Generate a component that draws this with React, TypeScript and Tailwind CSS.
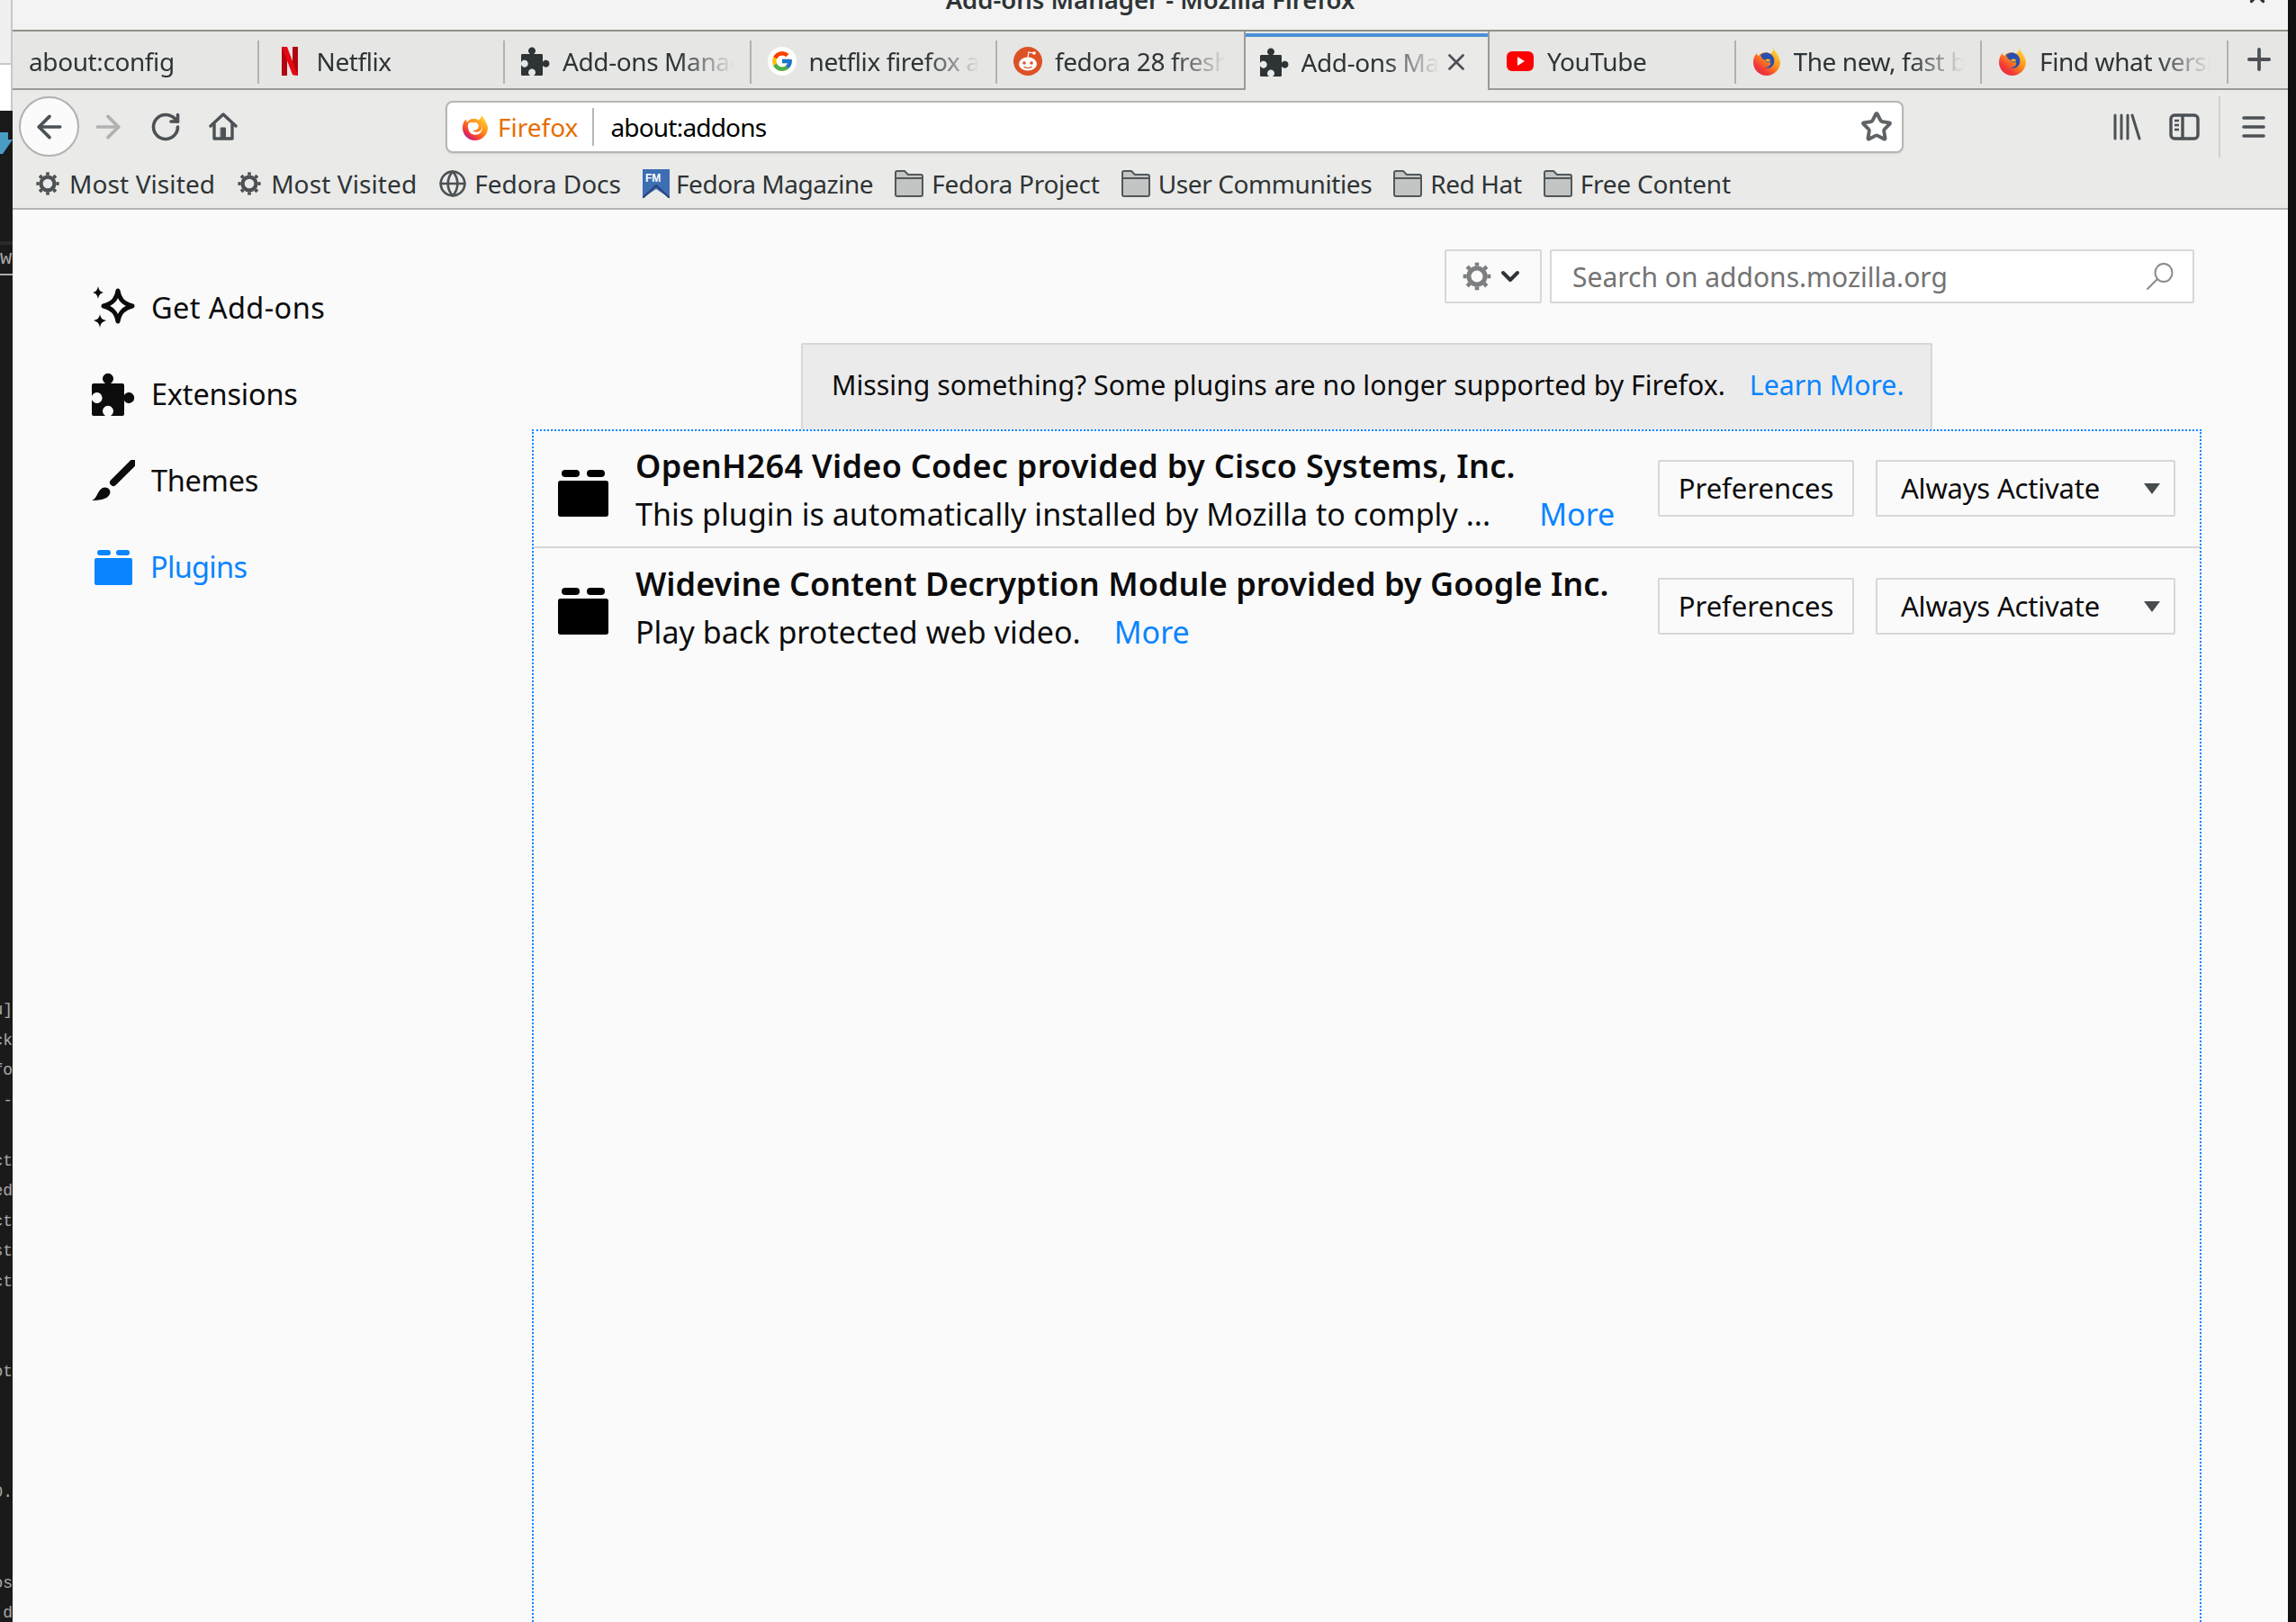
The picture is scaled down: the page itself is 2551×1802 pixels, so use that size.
import { ReactNode } from "react";
import { ArrowLeft, ArrowRight, ChevronDown, Globe, Plus, RotateCw, Star, X } from "lucide-react";
import { FcGoogle } from "react-icons/fc";

const PUZZLE =
    "M2 12H15A6 6 0 1 1 21 12H34A2 2 0 0 1 36 14V25A6 6 0 1 1 36 31V46A2 2 0 0 1 34 48H21A6 6 0 1 0 15 48H2A2 2 0 0 1 0 46V30A6 6 0 1 0 0 26V14A2 2 0 0 1 2 12Z";

function Puzzle({ size, color }: { size: number; color: string }) {
    return (
        <svg width={size} height={size} viewBox="0 0 48 48" fill={color}>
            <path d={PUZZLE} />
        </svg>
    );
}

function Brick({ w, h, color }: { w: number; h: number; color: string }) {
    return (
        <svg width={w} height={h} viewBox="0 0 42 39" fill={color}>
            <rect x="3" y="0" width="15" height="6" rx="3" />
            <rect x="24" y="0" width="15" height="6" rx="3" />
            <rect x="0" y="9" width="42" height="30" rx="2" />
        </svg>
    );
}

function Gear({ size, color }: { size: number; color: string }) {
    return (
        <svg width={size} height={size} viewBox="0 0 30 30" fill="none" stroke={color}>
            <circle cx="15" cy="15" r="8" strokeWidth="4.5" />
            {[0, 45, 90, 135, 180, 225, 270, 315].map((a) => (
                <line key={a} x1="15" y1="5" x2="15" y2="1.5" strokeWidth="4" transform={`rotate(${a} 15 15)`} />
            ))}
        </svg>
    );
}

function Folder() {
    return (
        <svg width="32" height="30" viewBox="0 0 32 30" fill="#c3c5c4" stroke="#51575a" strokeWidth="2">
            <path d="M1 27V3a2 2 0 0 1 2-2h8l4 4h14a2 2 0 0 1 2 2v20a2 2 0 0 1-2 2H3a2 2 0 0 1-2-2Z" />
            <path d="M1 9h30" fill="none" />
        </svg>
    );
}

function FedoraMag() {
    return (
        <svg width="30" height="32" viewBox="0 0 30 32">
            <path d="M0 0H30V32L15 22 0 32Z" fill="#3c6eb4" />
            <path d="M0 32 15 18 30 32" fill="none" stroke="#294172" strokeWidth="2" />
            <text x="3" y="14" fontSize="12" fontWeight="700" fill="#fff" fontFamily="Liberation Sans, sans-serif">
                FM
            </text>
        </svg>
    );
}

function Firefox({ size, blue }: { size: number; blue?: boolean }) {
    const id = blue ? "ffb" : "ffo";
    return (
        <svg width={size} height={size} viewBox="0 0 32 32">
            <defs>
                <linearGradient id={id} x1="0.85" y1="0.1" x2="0.2" y2="0.95">
                    <stop offset="0" stopColor="#ffd43a" />
                    <stop offset="0.45" stopColor="#ff8a16" />
                    <stop offset="0.8" stopColor="#f2383a" />
                    <stop offset="1" stopColor={blue ? "#e8303c" : "#b5179e"} />
                </linearGradient>
            </defs>
            <path
                d="M23 1C24 4 30 9 31 17 31 25 24 32 16 32 7 32 1 25 1 17 1 12 3 9 5 7 5 9 6 10 7 10 9 7 12 6 15 6 17 6 19 7 20 8 22 6 24 4 23 1Z"
                fill={`url(#${id})`}
            />
            {blue ? (
                <>
                    <path d="M9 9C11 7 15 6 18 7 23 9 25 13 24 18 23 23 17 25 13 23 17 23 21 21 20 17 17 18 14 17 14 15 11 14 10 12 9 9Z" fill="#2a4eb0" />
                    <path d="M14 15C16 13 19 13 20 15 19 17 16 17 14 15Z" fill="#ffb020" />
                </>
            ) : (
                <path d="M8 12C10 10 13 10 14 11 17 10 20 12 20 15 20 19 16 21 13 20 16 24 24 22 24 16 24 12 22 10 21 9 25 13 26 20 21 24 16 27 9 25 8 19 7 16 7 14 8 12Z" fill="#fff" />
            )}
        </svg>
    );
}

function Reddit() {
    return (
        <svg width="32" height="32" viewBox="0 0 32 32">
            <circle cx="16" cy="16" r="16" fill="#dd5127" />
            <ellipse cx="16" cy="19" rx="10" ry="7.5" fill="#fff" />
            <path d="M16 12 17 6 22 7" fill="none" stroke="#fff" strokeWidth="1.2" />
            <circle cx="23" cy="7" r="1.8" fill="#fff" />
            <circle cx="12" cy="18" r="1.8" fill="#dd5127" />
            <circle cx="20" cy="18" r="1.8" fill="#dd5127" />
            <path d="M11.5 22C14 24 18 24 20.5 22" fill="none" stroke="#dd5127" strokeWidth="1.2" />
        </svg>
    );
}

function Netflix() {
    return (
        <svg width="18" height="32" viewBox="0 0 18 32">
            <path d="M0 0H6V32L0 32Z" fill="#b1060f" />
            <path d="M12 0H18V32L12 31Z" fill="#b1060f" />
            <path d="M0 0H6L18 32 12 31Z" fill="#e50914" />
        </svg>
    );
}

function YouTube() {
    return (
        <svg width="30" height="22" viewBox="0 0 30 22">
            <rect width="30" height="22" rx="6" fill="#f00" />
            <path d="M12 6 20 11 12 16Z" fill="#fff" />
        </svg>
    );
}

const tabs: { label: string; icon?: ReactNode; active?: boolean }[] = [
    { label: "about:config" },
    { label: "Netflix", icon: <Netflix /> },
    { label: "Add-ons Manager", icon: <Puzzle size={32} color="#2e3436" /> },
    {
        label: "netflix firefox addon",
        icon: (
            <span className="flex h-[32px] w-[32px] items-center justify-center rounded-full bg-white">
                <FcGoogle size={26} />
            </span>
        ),
    },
    { label: "fedora 28 fresh install", icon: <Reddit /> },
    { label: "Add-ons Manager", icon: <Puzzle size={32} color="#2e3436" />, active: true },
    { label: "YouTube", icon: <YouTube /> },
    { label: "The new, fast browser", icon: <Firefox size={32} blue /> },
    { label: "Find what version of", icon: <Firefox size={32} blue /> },
];

const bookmarks: { label: string; icon: ReactNode; cls: string; gap: string }[] = [
    { label: "Most Visited", icon: <Gear size={28} color="#4b5154" />, cls: "tracking-[0.1px]", gap: "gap-[10px]" },
    { label: "Most Visited", icon: <Gear size={28} color="#4b5154" />, cls: "tracking-[0.1px]", gap: "gap-[10px]" },
    { label: "Fedora Docs", icon: <Globe size={32} color="#4b5154" strokeWidth={2} />, cls: "tracking-normal", gap: "gap-[8px]" },
    { label: "Fedora Magazine", icon: <FedoraMag />, cls: "tracking-[-0.45px]", gap: "gap-[7px]" },
    { label: "Fedora Project", icon: <Folder />, cls: "tracking-[-0.25px]", gap: "gap-[9px]" },
    { label: "User Communities", icon: <Folder />, cls: "tracking-[-0.4px]", gap: "gap-[9px]" },
    { label: "Red Hat", icon: <Folder />, cls: "tracking-[-0.4px]", gap: "gap-[9px]" },
    { label: "Free Content", icon: <Folder />, cls: "tracking-[-0.2px]", gap: "gap-[9px]" },
];

const termLines = ["u]", "ck", "fo", " -", "", "ct", "ed", "ct", "st", "ct", "", "", "ot", "", "", "", "0.", "", "", "os", "d"];

function TabItem({ label, icon, active }: { label: string; icon?: ReactNode; active?: boolean }) {
    return (
        <div
            className={
                active
                    ? "relative flex h-full w-[273.5px] shrink-0 items-center border-x-2 border-[#9a9a96] bg-[#eaeae8] pl-[16px] pr-[20px] pt-[2px]"
                    : "flex h-full w-[273.5px] shrink-0 items-center border-b-2 border-[#9a9a96] pl-[18px] pr-[20px] pt-[2px]"
            }
        >
            {active && <div className="absolute left-0 right-0 top-[2px] h-[4px] bg-[#4a90d9]" />}
            {icon && <div className="mr-[14px] flex w-[32px] shrink-0 justify-center">{icon}</div>}
            <div className="min-w-0 flex-1 overflow-hidden whitespace-nowrap text-[28px] leading-[40px] tracking-[-0.4px] text-[#2e3436] [mask-image:linear-gradient(to_right,black_calc(100%-60px),transparent)]">
                {label}
            </div>
            {active && <X size={30} color="#4b5154" strokeWidth={2.2} className="ml-[4px] shrink-0" />}
        </div>
    );
}

function Separator() {
    return (
        <div className="flex h-full w-0 items-start">
            <div className="relative mt-[10px] h-[48px] w-[2px] shrink-0 -translate-x-[2px] bg-[#b2b2ae]" />
        </div>
    );
}

function PluginRow(props: { title: string; desc: string; border?: boolean; titleCls: string; moreCls: string }) {
    const { title, desc, border, titleCls, moreCls } = props;
    return (
        <div
            className={
                border
                    ? "flex h-[130px] items-center border-b-2 border-[#d7d7db] px-[27px]"
                    : "flex h-[130px] items-center px-[27px]"
            }
        >
            <div className="mt-[10px] w-[56px] shrink-0">
                <Brick w={56} h={52} color="#000" />
            </div>
            <div className="ml-[30px] min-w-0 flex-1 pt-[2px]">
                <div className={`whitespace-nowrap text-[36px] font-semibold leading-[54px] text-[#0c0c0d] ${titleCls}`}>{title}</div>
                <div className="flex whitespace-nowrap text-[34px] leading-[53px] tracking-[0.05px] text-[#0c0c0d]">
                    <span>{desc}</span>
                    <a className={`text-[#0a84ff] ${moreCls}`}>More</a>
                </div>
            </div>
            <button className="ml-[20px] mb-[1px] flex h-[63px] w-[218px] shrink-0 items-center justify-center rounded-[2px] border-2 border-[#d7d7db] bg-[#fafafa] text-[31px] text-[#0c0c0d]">
                Preferences
            </button>
            <button className="ml-[24px] mb-[1px] flex h-[63px] w-[333px] shrink-0 items-center justify-between rounded-[2px] border-2 border-[#d7d7db] bg-[#fafafa] pl-[26px] pr-[15px] text-[31px] tracking-[-0.2px] text-[#0c0c0d]">
                <span>Always Activate</span>
                <svg width="18" height="12" viewBox="0 0 18 12" fill="#474c4e">
                    <path d="M0 0H18L9 12Z" />
                </svg>
            </button>
        </div>
    );
}

export default function App() {
    return (
        <div className="flex h-[1802px] w-[2551px] overflow-hidden bg-[#111] font-['Noto_Sans',sans-serif]">
            {/* what shows of the terminal behind the window */}
            <div className="flex w-[14px] shrink-0 flex-col overflow-hidden bg-[#1a1a1a] font-['Liberation_Mono',monospace] text-[18px] text-[#a8a8a8]">
                <div className="h-[72px] shrink-0 border-b-2 border-r-2 border-[#c8c8c6] bg-[#f0f0f0]" />
                <div className="h-[51px] shrink-0 border-r-2 border-[#c8c8c6] bg-white" />
                <svg className="mt-[24px] shrink-0" width="14" height="24" viewBox="0 0 14 24" fill="#4a9cc5">
                    <path d="M0 0H9V8H14L3 24H0Z" />
                </svg>
                <div className="mt-[97px] h-[4px] shrink-0 bg-[#2a2a2a]" />
                <div className="h-[34px] shrink-0 border-b-2 border-[#aaa] text-[22px] leading-[32px]">w</div>
                <div className="mt-[800px] flex shrink-0 flex-col">
                    {termLines.map((line, i) => (
                        <div key={i} className="flex h-[33.5px] justify-end whitespace-pre leading-[33.5px]">
                            {line}
                        </div>
                    ))}
                </div>
            </div>

            <div className="flex w-[2528px] shrink-0 flex-col bg-[#fafafa]">
                {/* title bar */}
                <div className="grid h-[33px] shrink-0 grid-cols-[1fr_auto_1fr] overflow-hidden bg-[#f3f3f3] text-[#2e3436]">
                    <div />
                    <div className="-mt-[16px] text-[27.5px] font-semibold leading-[32px]">Add-ons Manager - Mozilla Firefox</div>
                    <div className="flex justify-end pr-[21px]">
                        <X size={26} strokeWidth={3} className="-mt-[18px]" />
                    </div>
                </div>

                {/* tabs */}
                <div className="flex h-[67px] shrink-0 border-t-2 border-[#91918c] bg-[#e6e6e4]">
                    {tabs.map((t, i) => (
                        <div key={i} className="flex h-full">
                            <TabItem {...t} />
                            {!t.active && !tabs[i + 1]?.active && <Separator />}
                        </div>
                    ))}
                    <div className="flex h-full flex-1 items-center justify-center border-b-2 border-[#9a9a96] pb-[2px] pl-[2px]">
                        <Plus size={38} color="#4b5154" strokeWidth={2.4} />
                    </div>
                </div>

                {/* nav bar */}
                <div className="flex h-[81px] shrink-0 items-center bg-[#eaeae8] pl-[7px]">
                    <div className="flex h-[67px] w-[67px] shrink-0 items-center justify-center rounded-full border-2 border-[#b1b1b1] bg-[#fbfbfb]">
                        <ArrowLeft size={40} color="#4b5154" strokeWidth={2.2} />
                    </div>
                    <div className="flex w-[64px] shrink-0 justify-center">
                        <ArrowRight size={40} color="#b1b1b1" strokeWidth={2.2} />
                    </div>
                    <div className="flex w-[64px] shrink-0 justify-center">
                        <RotateCw size={36} color="#4b5154" strokeWidth={2.4} />
                    </div>
                    <div className="flex w-[64px] shrink-0 justify-center">
                        <svg width="32" height="32" viewBox="0 0 32 32" fill="none" stroke="#4b5154" strokeWidth="3.4" strokeLinejoin="round" strokeLinecap="round">
                            <path d="M2 15 16 2 30 15" />
                            <path d="M6 13V29H26V13" />
                            <rect x="13.5" y="17" width="5" height="11" fill="#4b5154" strokeWidth="1" />
                        </svg>
                    </div>
                    <div className="ml-[215px] flex h-[58px] w-[1620px] shrink-0 items-center rounded-[8px] border-2 border-[#b6b6b2] bg-white pl-[16px] pr-[10px] shadow-[0_1px_2px_rgba(0,0,0,0.1)]">
                        <Firefox size={30} />
                        <span className="ml-[10px] text-[28px] text-[#e66e00]">Firefox</span>
                        <div className="ml-[16px] h-[42px] w-[2px] bg-[#b6b6b2]" />
                        <span className="ml-[18px] flex-1 text-[28px] tracking-[-0.8px] text-black">about:addons</span>
                        <Star size={36} color="#5f6365" strokeWidth={2.6} />
                    </div>
                    <div className="ml-[216px] flex w-[64px] shrink-0 justify-center">
                        <svg width="32" height="32" viewBox="0 0 32 32" stroke="#4b5154" strokeWidth="3" strokeLinecap="round">
                            <path d="M3 3V29M10 3V29M17 3V29M22 3 30 29" />
                        </svg>
                    </div>
                    <div className="flex w-[64px] shrink-0 justify-center">
                        <svg width="34" height="30" viewBox="0 0 34 30" fill="none" stroke="#4b5154" strokeWidth="3.4">
                            <rect x="2" y="2" width="30" height="26" rx="4" />
                            <path d="M15 2V28" />
                            <path d="M6 8H11M6 13H11M6 18H11" strokeWidth="2.4" />
                        </svg>
                    </div>
                    <div className="ml-[6px] h-[68px] w-[2px] shrink-0 bg-[#cfcfcc]" />
                    <div className="flex w-[74px] shrink-0 justify-center">
                        <svg width="26" height="26" viewBox="0 0 26 26" stroke="#4b5154" strokeWidth="3.6" strokeLinecap="round">
                            <path d="M2 3H24M2 13H24M2 23H24" />
                        </svg>
                    </div>
                </div>

                {/* bookmarks */}
                <div className="flex h-[52px] shrink-0 items-center gap-[24px] border-b-2 border-[#b4b4b0] bg-[#eaeae8] pl-[25px] pb-[4px] text-[28px] text-[#2e3436]">
                    {bookmarks.map((b, i) => (
                        <div key={i} className={`flex items-center whitespace-nowrap ${b.gap}`}>
                            {b.icon}
                            <span className={b.cls}>{b.label}</span>
                        </div>
                    ))}
                </div>

                {/* page */}
                <div className="flex min-h-0 flex-1">
                    <nav className="w-[577px] shrink-0 pl-[88px] pt-[61px] text-[32.5px] text-[#0c0c0d]">
                        <div className="flex h-[96px] items-center gap-[18px]">
                            <svg width="48" height="48" viewBox="0 0 48 48" fill="#0c0c0d">
                                <path d="M29 5C31 15 35 19 45 22 35 25 31 29 29 39 27 29 23 25 13 22 23 19 27 15 29 5Z" fill="none" stroke="#0c0c0d" strokeWidth="5" strokeLinejoin="round" />
                                <path d="M7 0C8 4 9 6 13 7 9 8 8 10 7 14 6 10 5 8 1 7 5 6 6 4 7 0Z" />
                                <path d="M9 31C10 35 11 37 16 38 11 40 10 41 9 46 8 41 7 40 2 38 7 37 8 35 9 31Z" />
                            </svg>
                            <span className="tracking-[0.4px]">Get Add-ons</span>
                        </div>
                        <div className="flex h-[96px] items-center gap-[18px]">
                            <Puzzle size={48} color="#0c0c0d" />
                            <span className="tracking-[-0.2px]">Extensions</span>
                        </div>
                        <div className="flex h-[96px] items-center gap-[18px]">
                            <svg width="48" height="46" viewBox="0 0 48 46" fill="#0c0c0d">
                                <path d="M46 3 24 25" stroke="#0c0c0d" strokeWidth="8" strokeLinecap="round" />
                                <path d="M0 45C6 43 6 34 12 31 17 29 22 33 20 38 17 44 8 45 0 45Z" />
                            </svg>
                            <span className="tracking-[-0.3px]">Themes</span>
                        </div>
                        <div className="flex h-[96px] items-center gap-[20px] pl-[3px] text-[#0a84ff]">
                            <Brick w={42} h={39} color="#0a84ff" />
                            <span className="tracking-[-0.7px]">Plugins</span>
                        </div>
                    </nav>

                    <main className="flex w-[1855px] shrink-0 flex-col">
                        <div className="mt-[44px] flex shrink-0 justify-end gap-[9px] pr-[8px]">
                            <div className="flex h-[60px] w-[108px] items-center justify-center gap-[4px] rounded-[2px] border-2 border-[#d7d7db] bg-[#fafafa]">
                                <Gear size={34} color="#7c7f80" />
                                <ChevronDown size={32} color="#2e3436" strokeWidth={3} />
                            </div>
                            <div className="flex h-[60px] w-[716px] items-center justify-between rounded-[2px] border-2 border-[#d7d7db] bg-white pl-[23px] pr-[20px] text-[30px] text-[#737373]">
                                <span>Search on addons.mozilla.org</span>
                                <svg width="32" height="32" viewBox="0 0 32 32" fill="none" stroke="#8a8a8a" strokeWidth="2" strokeLinecap="round">
                                    <ellipse cx="20" cy="12" rx="9.5" ry="10" />
                                    <path d="M13 19 2 30" />
                                </svg>
                            </div>
                        </div>
                        <div className="mx-auto mt-[44px] flex h-[96px] w-[1257px] shrink-0 items-center rounded-t-[2px] border-2 border-b-0 border-[#d7d7db] bg-[#ebebeb] pb-[4px] pl-[32px] text-[30.25px] text-[#0c0c0d]">
                            <span>Missing something? Some plugins are no longer supported by Firefox.</span>
                            <a className="ml-[27px] text-[#0a84ff]">Learn More.</a>
                        </div>
                        <div className="h-[1400px] shrink-0 border-2 border-dotted border-[#0a84ff]">
                            <PluginRow
                                border
                                title="OpenH264 Video Codec provided by Cisco Systems, Inc."
                                desc="This plugin is automatically installed by Mozilla to comply ..."
                                titleCls="tracking-[0.3px]"
                                moreCls="ml-[54px]"
                            />
                            <PluginRow
                                title="Widevine Content Decryption Module provided by Google Inc."
                                desc="Play back protected web video."
                                titleCls="tracking-[0.04px]"
                                moreCls="ml-[37px]"
                            />
                        </div>
                    </main>
                </div>
            </div>

            <div className="flex-1 bg-[#111]" />
        </div>
    );
}
